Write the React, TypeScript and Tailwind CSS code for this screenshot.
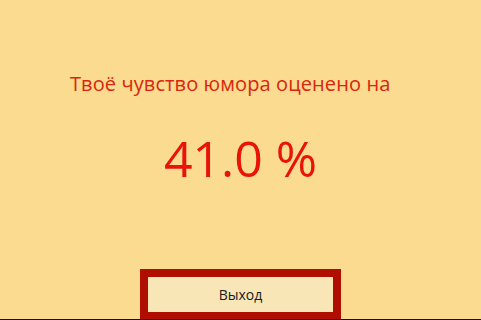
export default function App() {
  return (
    <div
      className="flex h-[320px] w-[481px] flex-col overflow-hidden bg-[#fadb90]"
      style={{ fontFamily: '"Open Sans", "Noto Sans", sans-serif' }}
    >
      <p className="mt-[70px] pl-[70px] text-[20px] leading-[28px] tracking-[0.1px] text-[#d9260c]">
        Твоё чувство юмора оценено на
      </p>
      <p className="mt-[31px] text-center text-[50px] leading-[58px] text-[#e8140a]">
        41.0 %
      </p>
      <div className="mt-auto flex justify-center">
        <button className="h-[50px] w-[201px] border-[8px] border-b-[7px] border-[#b00e00] bg-[#f8e6b6] text-[14px] text-[#1a1a1a]">
          Выход
        </button>
      </div>
      <div className="h-px bg-[#2a0800]" />
    </div>
  );
}
